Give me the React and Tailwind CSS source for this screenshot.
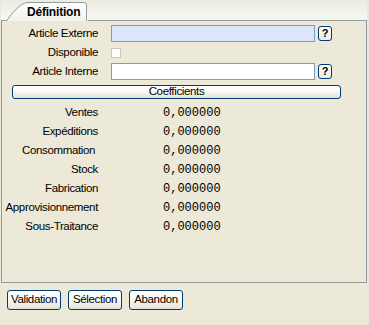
const coefficients = [
  "Ventes",
  "Expéditions",
  "Consommation ",
  "Stock",
  "Fabrication",
  "Approvisionnement",
  "Sous-Traitance",
];

function HelpButton() {
  return (
    <button className="ml-[3px] flex h-[15px] w-[14px] items-center justify-center rounded-[3px] border border-[#003c74] bg-gradient-to-b from-white to-[#ecebe4] text-[11px] font-bold leading-none text-black">
      ?
    </button>
  );
}

function XpButton({ children, className }) {
  return (
    <button
      className={`flex items-center justify-center rounded-[3px] border border-[#003c74] bg-gradient-to-b from-white via-[#f8f8f4] to-[#e4e2d6] leading-none text-black ${className}`}
    >
      {children}
    </button>
  );
}

function Tab() {
  return (
    <div className="relative h-[20px] w-[82px] shrink-0">
      <svg className="absolute inset-0" width="82" height="20" viewBox="0 0 82 20">
        <defs>
          <linearGradient id="tabfill" x1="0" y1="0" x2="0" y2="1">
            <stop offset="0" stopColor="#ffffff" />
            <stop offset="1" stopColor="#f3f2ec" />
          </linearGradient>
        </defs>
        <path
          d="M0.5 20 Q9 7 18 2.5 Q19.5 1.5 22 1.5 L78 1.5 Q80.5 1.5 80.5 4 L80.5 20 Z"
          fill="url(#tabfill)"
        />
        <path
          d="M0.5 20 Q9 7 18 2.5 Q19.5 1.5 22 1.5 L78 1.5 Q80.5 1.5 80.5 4 L80.5 20"
          fill="none"
          stroke="#919b9c"
        />
      </svg>
      <span className="relative block pl-[21px] pt-[4px] text-[12px] font-bold leading-[14px] tracking-[-0.2px]">
        Définition
      </span>
    </div>
  );
}

export default function App() {
  return (
    <div
      className="flex h-[325px] w-[369px] flex-col bg-[#ece9d8] text-[11.5px] tracking-[-0.35px] text-black"
      style={{ fontFamily: '"Liberation Sans", Arial, sans-serif' }}
    >
      {/* tab strip */}
      <div className="ml-[1px] flex h-[21px] w-[366px] items-end bg-gradient-to-b from-[#ecebdf] to-[#f8f8f4]">
        <div className="h-[1px] w-[5px] bg-[#919b9c]" />
        <Tab />
        <div className="h-[1px] flex-1 bg-[#919b9c]" />
      </div>

      {/* panel */}
      <div className="ml-[1px] flex h-[262px] w-[366px] flex-col border-x border-b border-[#919b9c] bg-[#ece9d8] pt-[4px]">
        <div className="flex h-[17px] items-center">
          <div className="w-[96px] text-right">Article Externe</div>
          <div className="ml-[13px] h-[17px] w-[204px] border border-[#7f9db9] bg-[#dce6fb]" />
          <HelpButton />
        </div>
        <div className="flex h-[21px] items-center">
          <div className="w-[96px] text-right">Disponible</div>
          <div className="ml-[13px] h-[10px] w-[10px] border border-[#c9c7ba] bg-white" />
        </div>
        <div className="flex h-[17px] items-center">
          <div className="w-[96px] text-right">Article Interne</div>
          <div className="ml-[13px] h-[17px] w-[204px] border border-[#7f9db9] bg-white" />
          <HelpButton />
        </div>

        <XpButton className="ml-[10px] mt-[5px] h-[14px] w-[329px]">Coefficients</XpButton>

        <div className="mt-[4px] flex flex-col">
          {coefficients.map((label) => (
            <div key={label} className="flex h-[19px] items-center">
              <div className="w-[96px] whitespace-pre text-right">{label}</div>
              <div
                className="ml-[65px] text-[12px] tracking-normal"
                style={{ fontFamily: '"Liberation Mono", "Courier New", monospace' }}
              >
                0,000000
              </div>
            </div>
          ))}
        </div>
      </div>

      {/* footer buttons */}
      <div className="ml-[7px] mt-[7px] flex gap-[7px]">
        <XpButton className="h-[20px] w-[54px]">Validation</XpButton>
        <XpButton className="h-[20px] w-[54px]">Sélection</XpButton>
        <XpButton className="h-[20px] w-[54px]">Abandon</XpButton>
      </div>
    </div>
  );
}
